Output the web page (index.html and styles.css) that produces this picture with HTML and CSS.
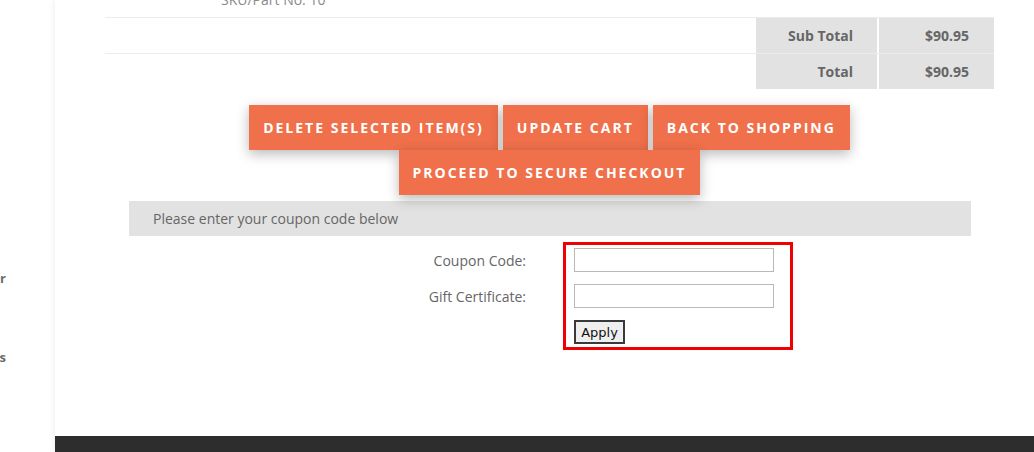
FILE: index.html
```html
<!DOCTYPE html>
<html lang="en">
<head>
  <meta charset="UTF-8">
  <title>Shopping Cart</title>
  <link rel="stylesheet" href="styles.css">
</head>
<body>
  <!-- side menu (mostly scrolled out of view) -->
  <aside class="sidebar">
    <div class="side-link side-link-first">Newsletter</div>
    <div class="side-link">Specials</div>
  </aside>

  <div class="page">
    <div class="content">
      <!-- cart lines -->
      <div class="item-row">
        <div class="item-sku">SKU/Part No: 10</div>
      </div>
      <div class="total-row">
        <div class="total-spacer"></div>
        <div class="total-label">Sub Total</div>
        <div class="total-value">$90.95</div>
      </div>
      <div class="total-row total-row-last">
        <div class="total-spacer"></div>
        <div class="total-label">Total</div>
        <div class="total-value">$90.95</div>
      </div>

      <!-- cart actions -->
      <div class="cart-actions">
        <button class="cart-btn">Delete Selected Item(s)</button>
        <button class="cart-btn">Update Cart</button>
        <button class="cart-btn">Back to Shopping</button>
        <button class="cart-btn">Proceed to Secure Checkout</button>
      </div>

      <!-- coupons -->
      <div class="coupon-bar">Please enter your coupon code below</div>
      <form class="coupon-form">
        <label class="coupon-label" for="couponCode">Coupon Code:</label>
        <input class="coupon-input" type="text" id="couponCode">
        <label class="coupon-label" for="giftCert">Gift Certificate:</label>
        <input class="coupon-input" type="text" id="giftCert">
        <span></span>
        <div><button type="button" class="apply-btn">Apply</button></div>
        <div class="highlight-box"></div>
      </form>
    </div>
    <footer class="footer"></footer>
  </div>
</body>
</html>
```

FILE: styles.css
```css
/* page frame */
body {
  margin: 0;
  height: 452px;
  display: flex;
  overflow: hidden;
  background: #ffffff;
  font-family: 'Open Sans', 'Liberation Sans', sans-serif;
  font-size: 14px;
  color: #666666;
}

/* left menu, text runs off to the left */
.sidebar {
  width: 55px;
  flex-shrink: 0;
  overflow: hidden;
  display: flex;
  flex-direction: column;
  padding-right: 49px;
  box-sizing: border-box;
}

.side-link {
  display: flex;
  justify-content: flex-end;
  white-space: nowrap;
  font-weight: 700;
  font-size: 13px;
  color: #6b6b6b;
  line-height: 20px;
  margin-top: 59px;
}

.side-link-first {
  margin-top: 268px;
}

.page {
  flex: 1;
  display: flex;
  flex-direction: column;
  box-shadow: -1px 0 6px rgba(0, 0, 0, 0.07);
  position: relative;
}

.content {
  flex: 1;
  padding: 0 40px 0 50px;
}

/* cart table */
.item-row {
  display: flow-root;
  height: 17px;
  border-bottom: 1px solid #ececec;
}

.item-sku {
  margin-top: -9px;
  padding-left: 116px;
  line-height: 17px;
  color: #8a8a8a;
}

.total-row {
  display: grid;
  grid-template-columns: 1fr 121px 115px;
  column-gap: 2px;
  height: 35px;
  border-bottom: 1px solid #ececec;
}

.total-row-last {
  border-bottom: none;
}

.total-label,
.total-value {
  background: #e2e2e2;
  text-align: right;
  font-weight: 700;
  line-height: 35px;
  color: #666666;
}

.total-label {
  padding-right: 24px;
}

.total-value {
  padding-right: 25px;
}

/* buttons */
.cart-actions {
  display: flex;
  flex-wrap: wrap;
  justify-content: center;
  column-gap: 5px;
  margin: 16px auto 0;
  width: 610px;
}

.cart-btn {
  height: 45px;
  padding: 0 14px;
  border: none;
  background: #ef704a;
  color: #ffffff;
  font-family: 'Open Sans', 'Liberation Sans', sans-serif;
  font-weight: 700;
  font-size: 14px;
  letter-spacing: 2px;
  text-transform: uppercase;
  box-shadow: 0 4px 12px rgba(0, 0, 0, 0.28);
  cursor: pointer;
}

/* coupon block */
.coupon-bar {
  margin: 6px 23px 0 24px;
  height: 35px;
  line-height: 35px;
  padding-left: 24px;
  background: #e2e2e2;
  color: #666666;
}

.coupon-form {
  position: relative;
  display: grid;
  grid-template-columns: 421px 200px;
  column-gap: 48px;
  row-gap: 12px;
  align-items: center;
  margin-top: 12px;
}

.coupon-label {
  text-align: right;
}

.coupon-input {
  width: 200px;
  height: 24px;
  box-sizing: border-box;
  border: 1px solid #b8b8b8;
  margin: 0;
  padding: 0 4px;
}

.apply-btn {
  width: 51px;
  height: 24px;
  padding: 0;
  border: 2px solid #3a3a3a;
  border-radius: 0;
  background: #efefef;
  font-family: 'DejaVu Sans', sans-serif;
  font-size: 13px;
  color: #111111;
}

/* red frame drawn round the code fields */
.highlight-box {
  position: absolute;
  left: 458px;
  top: -6px;
  width: 230px;
  height: 108px;
  box-sizing: border-box;
  border: 3px solid #f00000;
}

.footer {
  height: 16px;
  background: #2d2d2d;
}
```
